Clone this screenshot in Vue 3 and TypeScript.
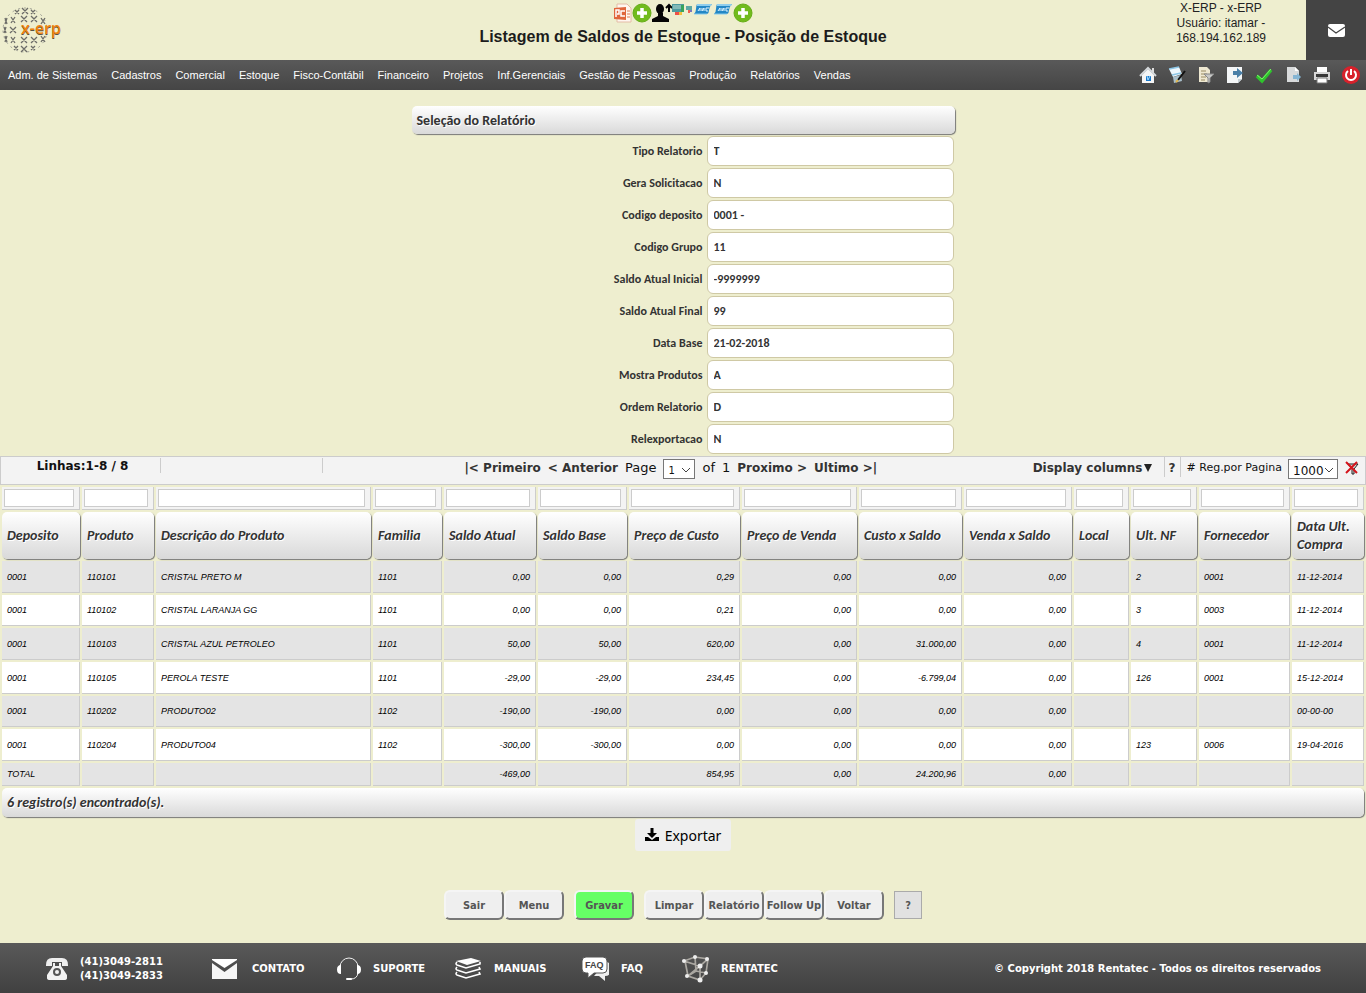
<script setup lang="ts">
import { ref } from 'vue'

interface Column {
  label: string
  width: number
  numeric?: boolean
}

const menu: string[] = [
  'Adm. de Sistemas', 'Cadastros', 'Comercial', 'Estoque', 'Fisco-Contábil', 'Financeiro',
  'Projetos', 'Inf.Gerenciais', 'Gestão de Pessoas', 'Produção', 'Relatórios', 'Vendas',
]

const fields = ref([
  { id: 'tipo', label: 'Tipo Relatorio', value: 'T' },
  { id: 'solicitacao', label: 'Gera Solicitacao', value: 'N' },
  { id: 'deposito', label: 'Codigo deposito', value: '0001 -' },
  { id: 'grupo', label: 'Codigo Grupo', value: '11' },
  { id: 'saldo-inicial', label: 'Saldo Atual Inicial', value: '-9999999' },
  { id: 'saldo-final', label: 'Saldo Atual Final', value: '99' },
  { id: 'data-base', label: 'Data Base', value: '21-02-2018' },
  { id: 'mostra', label: 'Mostra Produtos', value: 'A' },
  { id: 'ordem', label: 'Ordem Relatorio', value: 'D' },
  { id: 'exportacao', label: 'Relexportacao', value: 'N' },
])

const columns: Column[] = [
  { label: 'Deposito', width: 78 },
  { label: 'Produto', width: 72 },
  { label: 'Descrição do Produto', width: 215 },
  { label: 'Familia', width: 69 },
  { label: 'Saldo Atual', width: 92, numeric: true },
  { label: 'Saldo Base', width: 89, numeric: true },
  { label: 'Preço de Custo', width: 111, numeric: true },
  { label: 'Preço de Venda', width: 115, numeric: true },
  { label: 'Custo x Saldo', width: 103, numeric: true },
  { label: 'Venda x Saldo', width: 108, numeric: true },
  { label: 'Local', width: 55 },
  { label: 'Ult. NF', width: 66 },
  { label: 'Fornecedor', width: 91 },
  { label: 'Data Ult. Compra', width: 72 },
]

const rows: string[][] = [
  ['0001', '110101', 'CRISTAL PRETO M', '1101', '0,00', '0,00', '0,29', '0,00', '0,00', '0,00', '', '2', '0001', '11-12-2014'],
  ['0001', '110102', 'CRISTAL LARANJA GG', '1101', '0,00', '0,00', '0,21', '0,00', '0,00', '0,00', '', '3', '0003', '11-12-2014'],
  ['0001', '110103', 'CRISTAL AZUL PETROLEO', '1101', '50,00', '50,00', '620,00', '0,00', '31.000,00', '0,00', '', '4', '0001', '11-12-2014'],
  ['0001', '110105', 'PEROLA TESTE', '1101', '-29,00', '-29,00', '234,45', '0,00', '-6.799,04', '0,00', '', '126', '0001', '15-12-2014'],
  ['0001', '110202', 'PRODUTO02', '1102', '-190,00', '-190,00', '0,00', '0,00', '0,00', '0,00', '', '', '', '00-00-00'],
  ['0001', '110204', 'PRODUTO04', '1102', '-300,00', '-300,00', '0,00', '0,00', '0,00', '0,00', '', '123', '0006', '19-04-2016'],
]
const totals: string[] = ['TOTAL', '', '', '', '-469,00', '', '854,95', '0,00', '24.200,96', '0,00', '', '', '', '']

/* centre x, centre y, half width, half height of every mark on the globe */
const globe: number[][] = [
  [17, 12, 2, 2], [25, 11, 3, 3], [33, 12, 2, 2],
  [6, 21, 1, 3], [13, 20, 2, 3], [24, 19, 3, 3], [34, 19, 3, 3], [43, 21, 2, 3],
  [5, 30, 1, 3], [13, 30, 3, 3],
  [6, 39, 1, 3], [13, 40, 2, 3], [24, 40, 3, 3], [34, 40, 3, 3], [43, 39, 2, 3],
  [16, 48, 2, 2], [24, 49, 3, 3], [33, 48, 2, 2],
]
const globePath = globe
  .map(([x, y, w, h]) => `M${x - w} ${y - h}L${x + w} ${y + h}M${x + w} ${y - h}L${x - w} ${y + h}`)
  .join('')
</script>

<template>
  <div class="page">
    <header class="top">
      <a href="#" class="logo" aria-label="x-erp">
        <svg width="64" height="58" viewBox="0 0 64 58">
          <circle cx="25" cy="30" r="22" fill="none" stroke="#999a90" stroke-width="1" stroke-dasharray="2 4" />
          <path :d="globePath" stroke="#6c6c68" stroke-width="1.3" fill="none" />
          <text x="21" y="35" class="brand-shadow">x-erp</text>
          <text x="21" y="34" class="brand">x-erp</text>
        </svg>
      </a>
      <div class="heading">
        <div class="shortcuts">
          <svg width="19" height="20" viewBox="0 0 19 20"><path d="M4 1h10l4 4v14H4z" fill="#fff6ef" stroke="#e3bca6" /><path d="M1 5l12-1v13L1 16z" fill="#e0663c" /><path d="M3 14V7h3v4H4M12 8H8v5h4" stroke="#fff" stroke-width="1.5" fill="none" /><path d="M14 8h3M14 11h3M14 14h3" stroke="#dc7d56" /></svg>
          <svg width="20" height="20" viewBox="0 0 20 20"><circle cx="10" cy="10" r="9" fill="#71bb1d" stroke="#66ad18" /><path d="M10 5v10M5 10h10" stroke="#fff" stroke-width="3.5" /></svg>
          <svg width="20" height="20" viewBox="0 0 20 20"><ellipse cx="8" cy="6" rx="4" ry="5" fill="#050505" /><path d="M6 10h5v3l6 3v3H0v-3l6-3z" fill="#050505" /><path d="M17 9V3M14 5l3-3 3 3" stroke="#050505" stroke-width="2" fill="none" /></svg>
          <svg width="21" height="20" viewBox="0 0 21 20"><path d="M0 1h12v8H0z" fill="#4f9ba0" /><path d="M1 3h8M1 5h8" stroke="#b8d9d0" /><path d="M9 2h3v7H9z" fill="#38a45b" /><path d="M3 9h4v3H3z" fill="#ee5149" /><path d="M7 9h3v3H7z" fill="#f6c13a" /><path d="M14 3h6v4h-6z" fill="#5ea9a5" /><path d="M16 7h2v3h-2z" fill="#ee6050" /><path d="M18 7h2v2h-2z" fill="#7a76bd" /></svg>
          <svg v-for="n in 2" :key="n" width="20" height="20" viewBox="0 0 20 20"><path d="M4 1h15q-3 3-3 6 0 3-2 4H1q2-2 2-5t1-5z" fill="#2387c5" /><path d="M4 1h15l-1 2H4z" fill="#8fcdec" /><path d="M5 8l2-3v3M9 5v3l2-3v3M16 5h-3v3h2" stroke="#dff4ff" fill="none" /><path d="M1 11h13" stroke="#87cbed" /></svg>
          <svg width="20" height="20" viewBox="0 0 20 20"><circle cx="10" cy="10" r="9" fill="#71bb1d" stroke="#66ad18" /><path d="M10 5v10M5 10h10" stroke="#fff" stroke-width="3.5" /></svg>
        </div>
        <h1>Listagem de Saldos de Estoque - Posição de Estoque</h1>
      </div>
      <div class="account">
        <p>X-ERP - x-ERP<br />Usuário: itamar -<br />168.194.162.189</p>
        <button type="button" class="mail" aria-label="Mensagens">
          <svg width="18" height="14" viewBox="0 0 18 14"><rect x="1" y="1" width="17" height="13" rx="2" fill="#fff" /><path d="M1 4l8 6 9-6" fill="none" stroke="#444" stroke-width="1.2" /></svg>
        </button>
      </div>
    </header>

    <nav class="menu">
      <a v-for="item in menu" :key="item" href="#">{{ item }}</a>
      <div class="tools">
        <a href="#" aria-label="Início"><svg width="18" height="18" viewBox="0 0 18 18"><path d="M13 2h2v5h-2z" fill="#ddd" /><path d="M3 9l6-6 6 6v8H3z" fill="#f5f5f5" /><path d="M1 10l8-8 8 8" fill="none" stroke="#d5d9dc" stroke-width="2" /><path d="M7 10h5v5H7z" fill="#1878c9" /><path d="M8 10l1 4 2-4" stroke="#a9dcff" fill="none" /></svg></a>
        <a href="#" aria-label="Editar"><svg width="18" height="18" viewBox="0 0 18 18"><path d="M1 3l10-2 3 7-9 3z" fill="#eef7fc" /><path d="M1 3l10-2M4 9l9-2" stroke="#8cc6e6" stroke-width="1.5" /><path d="M5 11l8-2 1 6-8 2z" fill="#a9bfca" /><path d="M10 14l7-9" stroke="#111" stroke-width="2" /><path d="M8 16l2-2" stroke="#e0b64d" stroke-width="2" /></svg></a>
        <a href="#" aria-label="Filtrar"><svg width="18" height="18" viewBox="0 0 18 18"><path d="M2 1h8l3 3v12H2z" fill="#eee8d1" /><path d="M4 5h5M4 8h6M4 11h5M4 14h4" stroke="#998b62" /><path d="M7 8h10l-4 4v4l-2 1v-5z" fill="#c7c8c7" stroke="#888" /></svg></a>
        <a href="#" aria-label="Exportar registro"><svg width="18" height="18" viewBox="0 0 18 18"><path d="M1 1h15v12l-4 4H1z" fill="#f4f6f7" /><path d="M7 5h4V2l6 5-6 5V9H7z" fill="#4b80a8" /><path d="M12 17v-4h4" fill="#c6d0d5" /></svg></a>
        <a href="#" aria-label="Confirmar"><svg width="18" height="18" viewBox="0 0 18 18"><path d="M2 10l5 5 9-11" stroke="#2fc42d" stroke-width="3.5" fill="none" /><path d="M2 9l5 4 9-10" stroke="#7bf567" fill="none" /></svg></a>
        <a href="#" aria-label="Novo documento"><svg width="18" height="18" viewBox="0 0 18 18"><path d="M3 1h8l4 4v11H3z" fill="#d8dadb" /><path d="M11 1v4h4" fill="#fff" /><path d="M9 9h4V7l4 4-4 4v-2H9z" fill="#86b5d3" /></svg></a>
        <a href="#" aria-label="Imprimir"><svg width="18" height="18" viewBox="0 0 18 18"><path d="M4 1h10v6H4z" fill="#fff" /><path d="M1 6h16v8H1z" fill="#d7d7d7" /><path d="M3 8h12v3H3z" fill="#383838" /><path d="M4 12h10v5H4z" fill="#fff" stroke="#777" /></svg></a>
        <a href="#" aria-label="Desligar"><svg width="18" height="18" viewBox="0 0 18 18"><circle cx="9" cy="9" r="9" fill="#d8212b" /><path d="M6 5a5 5 0 1 0 6 0M9 3v6" fill="none" stroke="#fff" stroke-width="2" /></svg></a>
      </div>
    </nav>

    <main>
      <form class="selection" @submit.prevent>
        <h2>Seleção do Relatório</h2>
        <div v-for="field in fields" :key="field.id" class="field">
          <label :for="field.id">{{ field.label }}</label>
          <input :id="field.id" v-model="field.value" type="text" />
        </div>
      </form>

      <div class="pager">
        <div class="lines">Linhas:1-8 / 8</div>
        <div class="blank"></div>
        <div class="pages">
          <a href="#">|&lt; Primeiro</a>
          <a href="#">&lt; Anterior</a>
          <label for="page">Page</label>
          <span class="select page-select">
            <select id="page"><option>1</option></select>
            <svg width="10" height="6" viewBox="0 0 10 6"><path d="M1 1l4 4 4-4" /></svg>
          </span>
          <span>of</span>
          <span>1</span>
          <a href="#">Proximo &gt;</a>
          <a href="#">Ultimo &gt;|</a>
        </div>
        <div class="options">
          <a href="#" class="display">Display columns<svg width="10" height="10" viewBox="0 0 10 10"><path d="M1 1h8L5 9z" fill="#222" /></svg></a>
          <a href="#" class="help">?</a>
          <label for="per-page"># Reg.por Pagina</label>
          <span class="select size-select">
            <select id="per-page"><option>1000</option></select>
            <svg width="10" height="6" viewBox="0 0 10 6"><path d="M1 1l4 4 4-4" /></svg>
          </span>
          <a href="#" class="clear" aria-label="Limpar filtros"><svg width="14" height="14" viewBox="0 0 14 14"><path d="M3 3h10L9 8v5H7V8z" fill="#ddd" stroke="#222" /><path d="M1 1l11 11M12 1L1 12" stroke="#d4141c" stroke-width="2" /></svg></a>
        </div>
      </div>

      <table>
        <colgroup>
          <col v-for="col in columns" :key="col.label" :style="{ width: col.width + 'px' }" />
        </colgroup>
        <thead>
          <tr class="filters">
            <td v-for="col in columns" :key="col.label"><input type="text" :aria-label="'Filtrar ' + col.label" /></td>
          </tr>
          <tr>
            <th v-for="col in columns" :key="col.label" scope="col">{{ col.label }}</th>
          </tr>
        </thead>
        <tbody>
          <tr v-for="row in rows" :key="row[1]">
            <td v-for="(cell, i) in row" :key="i" :class="{ numeric: columns[i].numeric }">{{ cell }}</td>
          </tr>
        </tbody>
        <tfoot>
          <tr class="totals">
            <td v-for="(cell, i) in totals" :key="i" :class="{ numeric: columns[i].numeric }">{{ cell }}</td>
          </tr>
          <tr>
            <th :colspan="columns.length" class="found">6 registro(s) encontrado(s).</th>
          </tr>
        </tfoot>
      </table>

      <button type="button" class="export">
        <svg width="14" height="14" viewBox="0 0 14 14"><path d="M5.500 0h3v5H12L7 10 2 5h3.500z" /><path d="M0 9h3l4 3 4-3h3v4H0z" /></svg>
        Exportar
      </button>

      <div class="actions">
        <button type="button">Sair</button>
        <button type="button">Menu</button>
        <button type="button" class="save">Gravar</button>
        <button type="button">Limpar</button>
        <button type="button">Relatório</button>
        <button type="button">Follow Up</button>
        <button type="button">Voltar</button>
        <button type="button" class="question">?</button>
      </div>
    </main>

    <footer>
      <a href="#" class="phone">
        <svg width="22" height="24" viewBox="0 0 22 24"><path d="M0 8q0-7 6-7h10q6 0 6 7v1h-6V5H6v4H0z" fill="#eee" /><path d="M7 6h2v3h4V6h2v3l6 9v3q0 2-3 2H4q-3 0-3-2v-3l6-9z" fill="#f2f2f2" /><circle cx="11" cy="15" r="3" fill="none" stroke="#555" stroke-width="2" /></svg>
        <span>(41)3049-2811<br />(41)3049-2833</span>
      </a>
      <a href="#">
        <svg width="28" height="20" viewBox="0 0 28 20"><path d="M0 0h25v1L12.500 9 0 1z" fill="#fff" /><path d="M0 4l12.500 9L25 4v16H0z" fill="#f5f5f5" /></svg>
        <span>CONTATO</span>
      </a>
      <a href="#">
        <svg width="24" height="24" viewBox="0 0 24 24"><path d="M3 12V10a9 9 0 0 1 18 0v6q-1 6-7 6" fill="none" stroke="#eee" /><path d="M4 8v9Q0 17 0 12.500T4 8zM20 8v9q4 0 4-4.500T20 8z" fill="#fff" /><rect x="9" y="21" width="6" height="2" rx="1" fill="#fff" /></svg>
        <span>SUPORTE</span>
      </a>
      <a href="#">
        <svg width="27" height="24" viewBox="0 0 27 24"><path d="M1 4l15-3 10 3-14 4z" fill="#fff" /><path d="M2 5q-2 2 0 3l9 3 14-4V5M2 10q-2 2 0 3l9 3 14-4-1-2M2 15q-2 2 0 3l9 3 14-4-1-2" fill="none" stroke="#fff" stroke-width="1.6" /></svg>
        <span>MANUAIS</span>
      </a>
      <a href="#">
        <svg width="27" height="26" viewBox="0 0 27 26"><path d="M24 6q4 0 4 4v6q0 4-5 4v5l-6-5h-5" fill="#eee" /><path d="M4 1h17q4 0 4 4v8q0 4-4 4h-9l-6 5v-5H4q-4 0-4-4V5q0-4 4-4z" fill="#fff" stroke="#555" stroke-width="1" /><text x="3" y="12" class="faq">FAQ</text></svg>
        <span>FAQ</span>
      </a>
      <a href="#">
        <svg width="27" height="28" viewBox="0 0 27 28"><path d="M2 6l11-4 13 2-8 7zM3 6l3 15 12 4V11M26 4l-2 14-6 7M13 2l1 14-8 5M14 16l10 2M18 11L6 21" fill="none" stroke="#aaa7a1" stroke-width="1.7" /><g fill="#eee"><circle cx="2" cy="6" r="2" /><circle cx="13" cy="2" r="2" /><circle cx="25" cy="4" r="2" /><circle cx="18" cy="11" r="2.500" /><circle cx="5" cy="21" r="2" /><circle cx="18" cy="25" r="2.500" /><circle cx="24" cy="18" r="2" /></g></svg>
        <span>RENTATEC</span>
      </a>
      <p>© Copyright 2018 Rentatec - Todos os direitos reservados</p>
    </footer>
  </div>
</template>

<style>
body {
  margin: 0;
  background: #eeeecf;
}
</style>

<style scoped>
.page {
  min-height: 100vh;
  display: flex;
  flex-direction: column;
  background: #eeeecf;
  color: #222;
  font-family: "Liberation Sans", Arial, sans-serif;
}
* { box-sizing: border-box; }
a { color: inherit; text-decoration: none; }
svg { display: block; flex: none; }
p, h1, h2 { margin: 0; }

.top {
  display: grid;
  grid-template-columns: 1fr auto 1fr;
  height: 60px;
}
.logo svg { overflow: visible; }
.brand, .brand-shadow {
  font: 600 16px "Open Sans", sans-serif;
  fill: #ef8410;
}
.brand-shadow { fill: #59513f; }
.heading {
  display: flex;
  flex-direction: column;
  align-items: center;
  padding-top: 3px;
}
.shortcuts { display: flex; }
h1 {
  font-size: 16px;
  line-height: 28px;
  color: #1c1c1c;
}
.account {
  display: flex;
  justify-content: flex-end;
  gap: 40px;
}
.account p {
  padding-top: 1px;
  font-size: 12px;
  line-height: 15px;
  text-align: center;
}
.mail {
  width: 60px;
  height: 60px;
  border: 0;
  padding: 0;
  background: #444;
  display: grid;
  place-items: center;
}

.menu {
  display: flex;
  align-items: center;
  gap: 14px;
  height: 30px;
  padding: 0 6px 0 8px;
  background: linear-gradient(#595959, #454545);
  color: #fff;
  font-size: 11px;
}
.tools {
  display: flex;
  gap: 11px;
  margin-left: auto;
}

main {
  flex: 1;
  display: flex;
  flex-direction: column;
  align-items: center;
  padding-top: 16px;
}
.selection {
  width: 543px;
  max-width: 100%;
  font-family: Calibri, Carlito, Lato, sans-serif;
  font-weight: bold;
  color: #333;
}
h2 {
  height: 28px;
  margin-bottom: 2px;
  padding-left: 5px;
  border-radius: 5px;
  background: linear-gradient(#fff, #d9d9d9);
  box-shadow: 1px 1px 1px #777;
  font-size: 14px;
  line-height: 30px;
  text-shadow: 1px 1px 0 #fff;
}
.field {
  display: grid;
  grid-template-columns: 1fr 247px;
  align-items: center;
  gap: 4px;
  padding-right: 1px;
  margin-bottom: 2px;
}
.field label {
  font-size: 12px;
  text-align: right;
}
.field input {
  width: 100%;
  height: 30px;
  padding: 0 6px;
  border: 1px solid #cfc9a5;
  border-radius: 6px;
  background: #fff;
  color: #333;
  font: inherit;
  font-size: 12px;
}

.pager {
  width: 100%;
  height: 29px;
  display: flex;
  border: 1px solid #ccc;
  background: #f3f3f3;
  font-family: Verdana, "DejaVu Sans", sans-serif;
  font-size: 12px;
  color: #111;
}
.pager a { font-weight: bold; color: #333; }
.lines, .blank {
  width: 160px;
  height: 15px;
  margin-top: 1px;
  border-right: 1px solid #ccc;
}
.lines {
  padding-left: 4px;
  font-weight: bold;
  line-height: 16px;
  text-align: center;
}
.blank { width: 162px; }
.pages {
  flex: 1;
  display: flex;
  justify-content: center;
  gap: 7px;
  padding-right: 14px;
  line-height: 22px;
}
.pages label, .pages span { font-size: 13px; }
.select {
  position: relative;
  margin-top: 2px;
}
.select select {
  appearance: none;
  display: block;
  width: 100%;
  height: 20px;
  padding: 0 4px;
  border: 1px solid #777;
  border-radius: 0;
  background: #fff;
  color: #111;
  font: inherit;
}
.select svg {
  position: absolute;
  right: 4px;
  top: 8px;
  fill: none;
  stroke: #444;
  pointer-events: none;
}
.pages .page-select {
  width: 32px;
  font-size: 10px;
}
.size-select {
  width: 50px;
  font-size: 12px;
}
.options {
  display: flex;
  line-height: 22px;
  padding-right: 6px;
}
.display {
  display: flex;
  align-items: center;
  height: 22px;
  padding-right: 11px;
}
.help {
  width: 17px;
  height: 20px;
  border: solid #ccc;
  border-width: 0 1px;
  text-align: center;
}
.options label {
  margin: 0 6px;
  font-size: 11px;
}
.clear { margin: 4px 0 0 7px; }

table {
  width: 100%;
  table-layout: fixed;
  border-spacing: 2px;
  font-size: 9px;
  font-style: italic;
  color: #000;
}
td {
  padding: 0 5px;
  border: solid #ccc;
  border-width: 0 1px 1px 0;
  background: #fff;
  white-space: nowrap;
}
.filters td {
  height: 23px;
  padding: 2px 5px 2px 2px;
  background: #f3f3f3;
}
.filters input {
  display: block;
  width: 100%;
  height: 18px;
  padding: 0 2px;
  border: 1px solid #ccc;
  background: #fff;
}
th {
  height: 47px;
  padding: 0 5px;
  border-radius: 5px;
  background: linear-gradient(#fff, #d9d9d9);
  box-shadow: 1px 1px 1px #777;
  color: #333;
  font: italic bold 14px/18px Calibri, Carlito, Lato, sans-serif;
  text-align: left;
  text-shadow: 1px 1px 0 #fff;
}
tbody td { height: 32px; }
tbody tr:nth-child(3n + 2) td { height: 31px; }
tbody tr:nth-child(odd) td, .totals td { background: #e4e4e4; }
.totals td { height: 23px; }
td.numeric { text-align: right; }
th.found { height: 29px; }

.export {
  display: flex;
  align-items: center;
  gap: 6px;
  height: 32px;
  padding: 0 10px;
  border: 0;
  border-radius: 3px;
  background: #efefef;
  color: #000;
  font: 14px "Noto Sans", sans-serif;
}
.actions {
  display: flex;
  align-items: center;
  margin: 39px 0 23px;
}
.actions button {
  width: 60px;
  height: 30px;
  padding: 0;
  border: 2px solid #f5f5f5;
  border-right-color: #777;
  border-bottom-color: #777;
  border-radius: 6px;
  background: #efefef;
  color: #555;
  font: bold 11px Tahoma, "DejaVu Sans Condensed", "Noto Sans", sans-serif;
  white-space: nowrap;
}
.actions .save {
  margin: 0 10px;
  background: #66ff66;
}
.actions .question {
  width: 28px;
  height: 28px;
  margin-left: 10px;
  border: 1px solid #aaa;
  border-radius: 0;
  background: #e1e1e1;
}

footer {
  display: grid;
  grid-template-columns: 166px 125px 118px 127px 100px auto 1fr;
  align-items: center;
  height: 50px;
  padding: 1px 45px 0 46px;
  background: linear-gradient(#595959, #404040);
  color: #fff;
  font: bold 10px/14px Verdana, "DejaVu Sans", sans-serif;
}
footer a {
  display: flex;
  align-items: center;
  gap: 12px;
}
footer p { text-align: right; }
.faq {
  font: bold 9px "Liberation Sans", sans-serif;
  fill: #444;
}
</style>
